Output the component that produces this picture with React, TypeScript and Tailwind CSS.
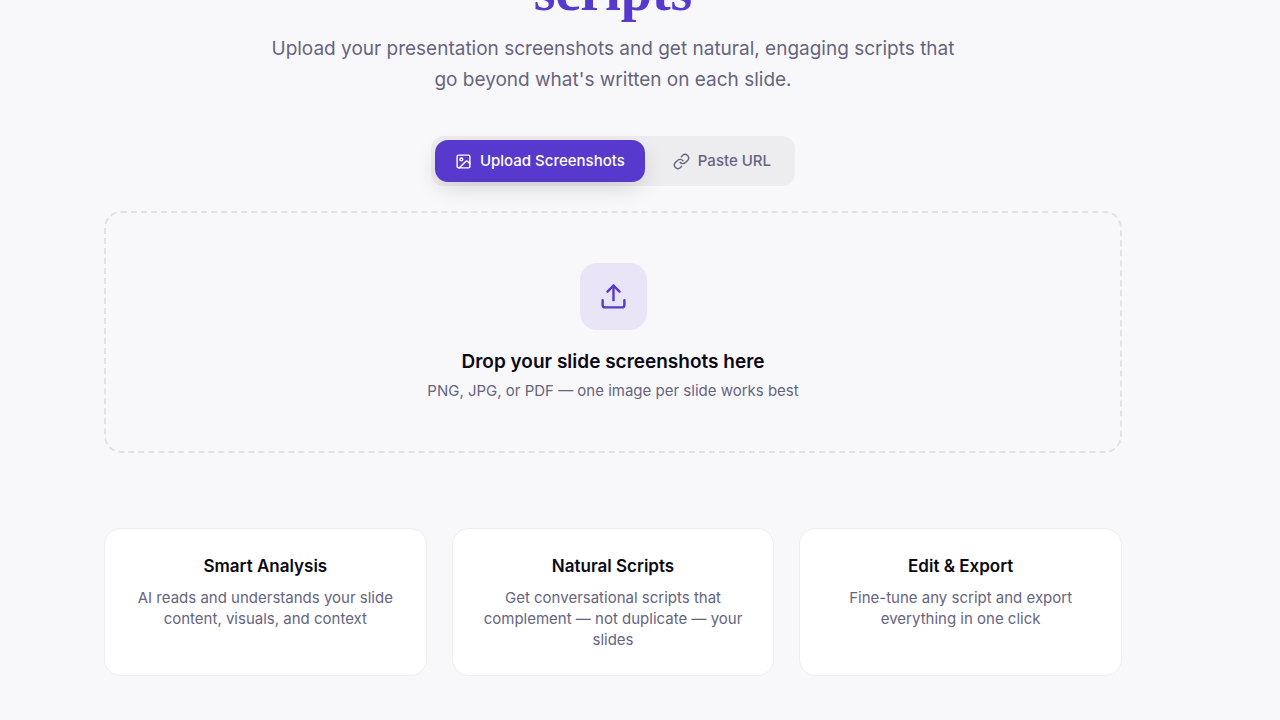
import { useState } from 'react';
import { Image, Upload } from 'lucide-react';

const features = [
  {
    title: 'Smart Analysis',
    text: 'AI reads and understands your slide content, visuals, and context',
  },
  {
    title: 'Natural Scripts',
    text: 'Get conversational scripts that complement — not duplicate — your slides',
  },
  {
    title: 'Edit & Export',
    text: 'Fine-tune any script and export everything in one click',
  },
];

function LinkIcon() {
  return (
    <svg
      className="size-[17px]"
      viewBox="0 0 24 24"
      fill="none"
      stroke="currentColor"
      strokeWidth="2"
      strokeLinecap="round"
      strokeLinejoin="round"
    >
      <path d="M10 13a5 5 0 0 0 7.54.54l3-3a5 5 0 0 0-7.07-7.07l-1.72 1.71" />
      <path d="M14 11a5 5 0 0 0-7.54-.54l-3 3a5 5 0 0 0 7.07 7.07l1.71-1.71" />
    </svg>
  );
}

function Hero() {
  return (
    <div className="flex flex-col items-center text-center">
      <h1 className="-mt-10 font-['Liberation_Serif',serif] text-[56px] leading-[62px] font-bold text-[#5739ce]">
        scripts
      </h1>
      <p className="mt-[11px] max-w-[700px] text-[19px] leading-[31px] text-[#66647f]">
        Upload your presentation screenshots and get natural, engaging scripts
        that go beyond what's written on each slide.
      </p>
    </div>
  );
}

function ModeSwitch() {
  const [mode, setMode] = useState('upload');
  const base =
    'flex h-[42px] items-center gap-2 rounded-[13px] px-5 text-[15px] font-medium';
  const active = 'bg-[#5739ce] text-white shadow-[0_8px_24px_-4px_rgba(0,0,0,0.16)]';
  const idle = 'text-[#66647f]';

  return (
    <div className="flex gap-2 rounded-[13px] bg-[#ededef] p-1">
      <button
        type="button"
        onClick={() => setMode('upload')}
        className={`${base} ${mode === 'upload' ? active : idle}`}
      >
        <Image size={17} />
        Upload Screenshots
      </button>
      <button
        type="button"
        onClick={() => setMode('url')}
        className={`${base} ${mode === 'url' ? active : idle}`}
      >
        <LinkIcon />
        Paste URL
      </button>
    </div>
  );
}

function DropZone() {
  return (
    <button
      type="button"
      className="flex w-full flex-col items-center rounded-[17px] border-2 border-dashed border-[#e2e2e5] py-[50px]"
    >
      <span className="flex size-[67px] items-center justify-center rounded-[17px] bg-[#e9e5f7] text-[#5739ce]">
        <Upload size={29} />
      </span>
      <span className="mt-[17px] text-[19px] leading-[29px] font-semibold text-[#0b0a14]">
        Drop your slide screenshots here
      </span>
      <span className="mt-1 text-[15px] leading-[21px] text-[#66647f]">
        PNG, JPG, or PDF — one image per slide works best
      </span>
    </button>
  );
}

export default function App() {
  return (
    <div className="min-h-screen overflow-hidden bg-[#f8f8fb] pr-[54px] font-[Inter,sans-serif]">
      <main className="mx-auto flex w-full max-w-[1018px] flex-col items-center pb-11">
        <Hero />
        <div className="mt-[41px] mb-[25px]">
          <ModeSwitch />
        </div>
        <DropZone />
        <section className="mt-[75px] grid w-full grid-cols-3 gap-[25px]">
          {features.map((feature) => (
            <div
              key={feature.title}
              className="rounded-[17px] border border-[#eeeef1] bg-white p-[25px] text-center"
            >
              <h3 className="text-[17px] leading-[25px] font-semibold text-[#0b0a14]">
                {feature.title}
              </h3>
              <p className="mt-2 text-[15px] leading-[21px] text-[#66647f]">
                {feature.text}
              </p>
            </div>
          ))}
        </section>
      </main>
    </div>
  );
}
